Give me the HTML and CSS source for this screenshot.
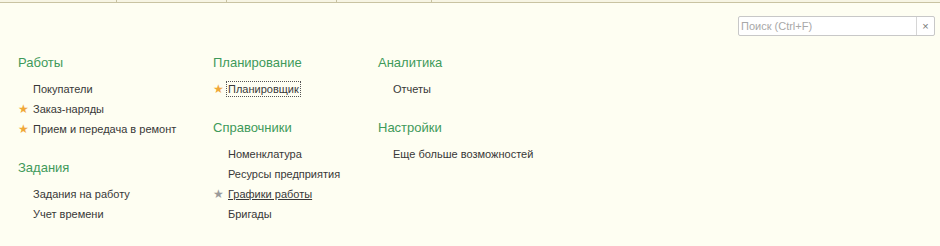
FILE: index.html
```html
<!DOCTYPE html>
<html lang="ru">
<head>
<meta charset="utf-8">
<link rel="stylesheet" href="styles.css">
</head>
<body>
<div class="tabs">
  <div class="tab t1"></div>
  <div class="tab t2"></div>
  <div class="tab t3"></div>
  <div class="tab t4"></div>
  <div class="tab t5"></div>
</div>
<div class="toolbar">
  <div class="search">
    <input class="search-input" type="text" placeholder="Поиск (Ctrl+F)">
    <span class="search-clear">×</span>
  </div>
</div>
<div class="columns">
  <div class="col c1">
    <div class="group">
      <div class="head">Работы</div>
      <div class="item"><span class="star"></span><span class="label">Покупатели</span></div>
      <div class="item"><span class="star on">★</span><span class="label">Заказ-наряды</span></div>
      <div class="item"><span class="star on">★</span><span class="label">Прием и передача в ремонт</span></div>
    </div>
    <div class="group">
      <div class="head">Задания</div>
      <div class="item"><span class="star"></span><span class="label">Задания на работу</span></div>
      <div class="item"><span class="star"></span><span class="label">Учет времени</span></div>
    </div>
  </div>
  <div class="col c2">
    <div class="group">
      <div class="head">Планирование</div>
      <div class="item"><span class="star on">★</span><span class="label focus">Планировщик</span></div>
    </div>
    <div class="group">
      <div class="head">Справочники</div>
      <div class="item"><span class="star"></span><span class="label">Номенклатура</span></div>
      <div class="item"><span class="star"></span><span class="label">Ресурсы предприятия</span></div>
      <div class="item"><span class="star gray">★</span><span class="label hover">Графики работы</span></div>
      <div class="item"><span class="star"></span><span class="label">Бригады</span></div>
    </div>
  </div>
  <div class="col c3">
    <div class="group">
      <div class="head">Аналитика</div>
      <div class="item"><span class="star"></span><span class="label">Отчеты</span></div>
    </div>
    <div class="group">
      <div class="head">Настройки</div>
      <div class="item"><span class="star"></span><span class="label">Еще больше возможностей</span></div>
    </div>
  </div>
</div>
</body>
</html>
```
FILE: styles.css
```css
html, body {
  margin: 0;
  padding: 0;
  background: #fefef2;
  font-family: "Liberation Sans", Arial, sans-serif;
  width: 940px;
  height: 246px;
  overflow: hidden;
}
.tabs {
  display: flex;
  height: 2px;
  background: #f7f5e4;
  border-bottom: 1px solid #c9c3a2;
}
.tab {
  border-right: 1px solid #c9c3a2;
  height: 2px;
}
.t1 { width: 116px; }
.t2 { width: 109px; }
.t3 { width: 109px; }
.t4 { width: 94px; }
.t5 { flex: 1; border-right: none; }
.toolbar {
  display: flex;
  justify-content: flex-end;
  padding: 13px 5px 0 0;
  height: 20px;
}
.search {
  display: flex;
  width: 197px;
  height: 20px;
  box-sizing: border-box;
  border: 1px solid #c8c8c8;
  border-radius: 2px;
  background: #fff;
}
.search-input {
  flex: 1;
  min-width: 0;
  border: none;
  outline: none;
  padding: 0 2px;
  margin: 0;
  font-family: "Liberation Sans", Arial, sans-serif;
  font-size: 11px;
  background: transparent;
  color: #333;
}
.search-input::placeholder { color: #a8a8a8; }
.search-clear {
  width: 17px;
  border-left: 1px solid #d6d6d6;
  display: flex;
  align-items: center;
  justify-content: center;
  font-size: 11px;
  color: #777;
}
.columns {
  display: flex;
  padding: 17px 0 0 18px;
}
.c1 { width: 195px; }
.c2 { width: 165px; }
.c3 { width: 200px; }
.group { margin-bottom: 19px; }
.head {
  font-size: 13px;
  color: #3e9a5a;
  height: 20px;
  line-height: 20px;
  margin-bottom: 6px;
}
.item {
  display: flex;
  align-items: center;
  height: 20px;
  font-size: 11px;
  color: #383838;
}
.star {
  width: 14px;
  font-size: 12px;
  line-height: 1;
}
.star.on { color: #f0a838; }
.star.gray { color: #9a9a9a; }
.label { line-height: 14px; padding: 0 1px; }
.label.focus { outline: 1px dotted #555; outline-offset: 0; }
.label.hover { text-decoration: underline; }
```
